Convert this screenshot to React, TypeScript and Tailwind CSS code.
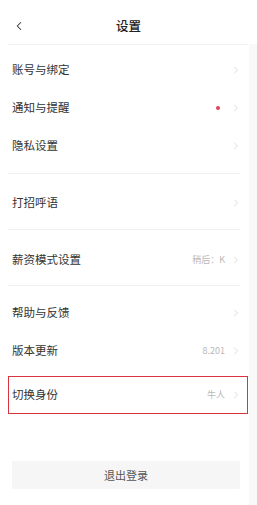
import { ChevronLeft, ChevronRight } from 'lucide-react';

type RowProps = {
  label: string;
  value?: string;
  dot?: boolean;
};

function Row({ label, value, dot }: RowProps) {
  return (
    <div className="h-[38px] flex items-center justify-between pl-[12px] pr-[15px]">
      <span className="text-[11.5px] text-[#333333]">{label}</span>
      <div className="flex items-center gap-[5px]">
        {dot && <span className="w-[4px] h-[4px] rounded-full bg-[#e0435a] mr-[5px]" />}
        {value && <span className="text-[9px] text-[#b8b8b8]">{value}</span>}
        <ChevronRight className="w-[12px] h-[12px] text-[#d0d0d0]" strokeWidth={1.5} />
      </div>
    </div>
  );
}

function Divider({ className = '' }: { className?: string }) {
  return <div className={`h-px bg-[#f1f1f1] ml-[8px] mr-[17px] ${className}`} />;
}

export default function App() {
  return (
    <div
      className="w-[257px] h-[505px] bg-white relative overflow-hidden"
      style={{ fontFamily: '"Noto Sans CJK SC", "Noto Sans", sans-serif' }}
    >
      <div className="absolute right-0 top-[44px] bottom-0 w-[8px] bg-[#f9f9f9]" />

      <div className="h-[44px] pt-[8px] relative">
        <div className="h-[36px] flex items-center justify-center relative">
          <ChevronLeft className="absolute left-[12px] w-[14px] h-[14px] text-[#333333]" strokeWidth={1.8} />
          <span className="text-[12.5px] font-medium text-[#222222]">设置</span>
        </div>
      </div>
      <div className="h-px bg-[#f1f1f1] ml-[8px] mr-[9px]" />

      <div className="relative pt-[6px]">
        <Row label="账号与绑定" />
        <Row label="通知与提醒" dot />
        <Row label="隐私设置" />
        <Divider className="mt-[8px]" />

        <div className="pt-[10px]">
          <Row label="打招呼语" />
        </div>
        <Divider className="mt-[7px]" />

        <div className="pt-[11px]">
          <Row label="薪资模式设置" value="稍后：K" />
        </div>
        <Divider className="mt-[6px]" />

        <div className="pt-[8px]">
          <Row label="帮助与反馈" />
          <Row label="版本更新" value="8.201" />
          <div className="mt-[6px] ml-[8px] mr-[9px] border-[1.5px] border-[#d9333f]">
            <div className="h-[36px] flex items-center justify-between pl-[3px] pr-[5px]">
              <span className="text-[11.5px] text-[#333333]">切换身份</span>
              <div className="flex items-center gap-[5px]">
                <span className="text-[9px] text-[#b8b8b8]">牛人</span>
                <ChevronRight className="w-[12px] h-[12px] text-[#d0d0d0]" strokeWidth={1.5} />
              </div>
            </div>
          </div>
        </div>

        <div className="mt-[47px] mx-[12px] mr-[17px] h-[28px] bg-[#f6f6f6] rounded-[2px] flex items-center justify-center">
          <span className="text-[11px] text-[#555555]">退出登录</span>
        </div>
      </div>
    </div>
  );
}
